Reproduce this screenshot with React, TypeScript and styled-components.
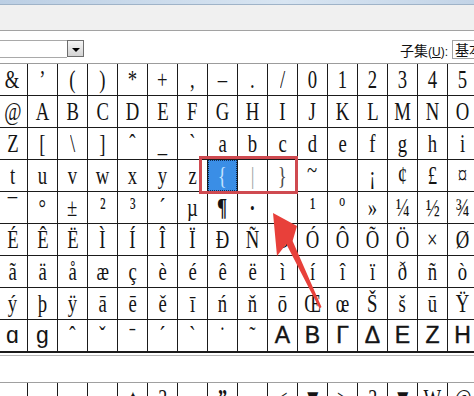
import React from 'react';
import styled, { createGlobalStyle, css } from 'styled-components';

const SERIF = '"Liberation Serif", "DejaVu Serif", "Times New Roman", serif';
const SANS = '"Liberation Sans", "DejaVu Sans", Arial, sans-serif';
const CJK = '"Noto Sans CJK SC", "Noto Sans CJK JP", sans-serif';

const GlobalStyle = createGlobalStyle`
  html, body {
    margin: 0;
    padding: 0;
    background: #fff;
  }
`;

type GlyphSpec = {
  sans?: boolean;
  heavy?: boolean;
  tone?: string;
  lift?: number;
  bold?: boolean;
};

const glyphRows: string[][] = [
  ['&', '’', '(', ')', '*', '+', ',', '–', '.', '/', '0', '1', '2', '3', '4', '5'],
  ['@', 'A', 'B', 'C', 'D', 'E', 'F', 'G', 'H', 'I', 'J', 'K', 'L', 'M', 'N', 'O'],
  ['Z', '[', '\\', ']', 'ˆ', '_', '`', 'a', 'b', 'c', 'd', 'e', 'f', 'g', 'h', 'i'],
  ['t', 'u', 'v', 'w', 'x', 'y', 'z', '{', '|', '}', '~', '', '¡', '¢', '£', '¤'],
  ['¯', '°', '±', '²', '³', '´', 'µ', '¶', '·', '', '¹', 'º', '»', '¼', '½', '¾'],
  ['É', 'Ê', 'Ë', 'Ì', 'Í', 'Î', 'Ï', 'Ð', 'Ñ', 'Ò', 'Ó', 'Ô', 'Õ', 'Ö', '×', 'Ø'],
  ['ã', 'ä', 'å', 'æ', 'ç', 'è', 'é', 'ê', 'ë', 'ì', 'í', 'î', 'ï', 'ð', 'ñ', 'ò'],
  ['ý', 'þ', 'ÿ', 'ā', 'ē', 'ě', 'ī', 'ń', 'ň', 'ō', 'Œ', 'œ', 'Š', 'š', 'ū', 'Ÿ'],
  ['ɑ', 'ɡ', 'ˆ', 'ˇ', 'ˉ', 'ˊ', 'ˋ', '˙', '˜', 'Α', 'Β', 'Γ', 'Δ', 'Ε', 'Ζ', 'Η'],
];

// next block of the table, only its top edge is on screen
const nextRow = ['', '', '', '', '♠', '?', '«', '”', '', '<', '▼', '>', '?', '▼', 'W', '@'];

const SELECTED = '3-7';

const overrides: Record<string, GlyphSpec> = {
  '3-8': { tone: '#9ca6a6' },
  '3-9': { tone: '#4a4a4a' },
  '3-10': { lift: 6 },
  '4-7': { bold: true },
  '4-8': { bold: true },
  '8-0': { sans: true },
  '8-1': { sans: true },
};
for (let c = 9; c < 16; c++) overrides[`8-${c}`] = { sans: true, heavy: true };

const Screen = styled.div`
  position: relative;
  width: 474px;
  height: 396px;
  overflow: hidden;
  background: #fff;
`;

const TitleStrip = styled.div`
  height: 4px;
  background: linear-gradient(to right, #bccfe4, #d8e5f2 60%, #c3d4e7);
  border-bottom: 1px solid #9fb3c8;
`;

const Toolbar = styled.div`
  height: 25px;
  background: #f0f0f0;
  border-bottom: 1px solid #a2a2a2;
`;

const FontBar = styled.div`
  box-sizing: border-box;
  height: 32px;
  padding-top: 9px;
  display: flex;
  align-items: flex-start;
  justify-content: space-between;
`;

const Combo = styled.div`
  display: flex;
  align-items: flex-start;
  margin-left: -8px;
  width: 92px;
`;

const ComboField = styled.div`
  box-sizing: border-box;
  flex: 1;
  height: 18px;
  border: 1px solid #a9a9a9;
  border-right: none;
  background: #fff;
`;

const DropButton = styled.div`
  box-sizing: border-box;
  width: 17px;
  height: 17px;
  padding-top: 3px;
  border: 1px solid #6d6d6d;
  background: linear-gradient(#f5f5f5, #d3d3d3);
  display: flex;
  align-items: center;
  justify-content: center;

  &::after {
    content: '';
    width: 0;
    height: 0;
    border-left: 4px solid transparent;
    border-right: 4px solid transparent;
    border-top: 4px solid #000;
  }
`;

const SubsetGroup = styled.div`
  display: flex;
  align-items: flex-start;
  gap: 4px;
  margin-right: -20px;
`;

const SubsetLabel = styled.span`
  font-family: ${CJK};
  font-size: 14px;
  line-height: 18px;
  margin-top: 1px;
  color: #111;
  white-space: nowrap;
`;

const Mnemonic = styled.span`
  font-family: ${SANS};
  font-size: 12px;

  u {
    text-underline-offset: 1px;
  }
`;

const SubsetBox = styled.div`
  box-sizing: border-box;
  width: 42px;
  height: 19px;
  padding-left: 2px;
  border: 1px solid #a3a3a3;
  font-family: ${CJK};
  font-size: 14px;
  line-height: 17px;
  color: #111;
  white-space: nowrap;
  overflow: hidden;
`;

const CharGrid = styled.div<{ $top?: boolean }>`
  position: relative;
  display: grid;
  grid-template-columns: repeat(16, 29px);
  grid-auto-rows: 31px;
  gap: 1px;
  width: max-content;
  margin-left: -2px;
  background: #1b1b1b;
  ${(p) =>
    p.$top &&
    css`
      border-top: 1px solid #9c9c9c;
      padding-bottom: 2px;
    `}
`;

const Cell = styled.div<{ $selected?: boolean }>`
  display: flex;
  align-items: center;
  justify-content: center;
  overflow: hidden;
  background: ${(p) => (p.$selected ? '#3a8ee6' : '#fff')};
  ${(p) =>
    p.$selected &&
    css`
      outline: 1px dotted #0d2c57;
      outline-offset: -1px;
    `}
`;

const Glyph = styled.span<{
  $sans?: boolean;
  $heavy?: boolean;
  $lift?: number;
  $bold?: boolean;
  $tone?: string;
}>`
  display: inline-block;
  font-family: ${(p) => (p.$sans ? SANS : SERIF)};
  font-size: ${(p) => (p.$sans ? 23 : 26)}px;
  font-weight: ${(p) => (p.$bold ? 700 : 400)};
  line-height: 31px;
  color: ${(p) => p.$tone ?? '#141414'};
  transform: scaleX(${(p) => (p.$sans ? 1 : 0.72)});
  ${(p) => p.$heavy && css`-webkit-text-stroke: 0.4px currentColor;`}
  ${(p) =>
    p.$lift &&
    css`
      align-self: flex-start;
      line-height: ${31 - 2 * p.$lift}px;
    `}
`;

const Highlight = styled.div`
  position: absolute;
  left: 201px;
  top: 92px;
  width: 99px;
  height: 38px;
  box-sizing: border-box;
  border: 3px solid #cf4a50;
  pointer-events: none;
`;

const Divider = styled.div`
  margin-top: 2px;
  height: 26px;
  border-top: 1px solid #b6b6b6;
  border-bottom: 1px solid #a0a0a0;
  background: #fff;
`;

const ArrowLayer = styled.svg`
  position: absolute;
  left: 0;
  top: 0;
  width: 474px;
  height: 396px;
  pointer-events: none;
`;

const App: React.FC = () => {
  return (
    <Screen>
      <GlobalStyle />
      <TitleStrip />
      <Toolbar />

      <FontBar>
        <Combo>
          <ComboField />
          <DropButton />
        </Combo>
        <SubsetGroup>
          <SubsetLabel>
            子集
            <Mnemonic>
              (<u>U</u>):
            </Mnemonic>
          </SubsetLabel>
          <SubsetBox>基本拉丁语</SubsetBox>
        </SubsetGroup>
      </FontBar>

      <CharGrid $top>
        {glyphRows.map((row, r) =>
          row.map((ch, c) => {
            const key = `${r}-${c}`;
            const spec = overrides[key] ?? {};
            const selected = key === SELECTED;
            return (
              <Cell key={key} $selected={selected}>
                <Glyph
                  $sans={spec.sans}
                  $heavy={spec.heavy}
                  $lift={spec.lift}
                  $bold={spec.bold}
                  $tone={selected ? '#c4e4ff' : spec.tone}
                >
                  {ch}
                </Glyph>
              </Cell>
            );
          })
        )}
        <Highlight />
      </CharGrid>

      <Divider />

      <CharGrid>
        {nextRow.map((ch, c) => (
          <Cell key={c}>
            <Glyph $bold={ch === '”' || ch === '▼'}>{ch}</Glyph>
          </Cell>
        ))}
      </CharGrid>

      <ArrowLayer viewBox="0 0 474 396">
        <polygon
          points="273,213 297,226 292.6,241 321.5,307 319.5,308.5 286.3,244 277,256"
          fill="#e8403a"
        />
      </ArrowLayer>
    </Screen>
  );
};

export default App;
